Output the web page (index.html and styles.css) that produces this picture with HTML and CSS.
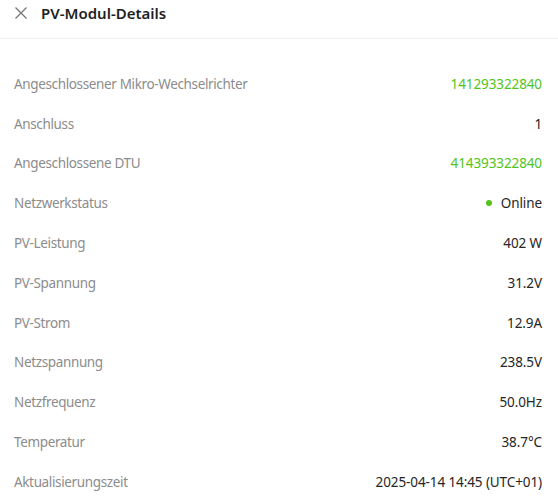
FILE: index.html
```html
<!DOCTYPE html>
<html lang="de">
<head>
<meta charset="UTF-8" />
<meta name="viewport" content="width=device-width, initial-scale=1" />
<title>PV-Modul-Details</title>
<link rel="stylesheet" href="styles.css">
</head>
<body>

<div class="header">
  <svg class="close" width="12" height="12" viewBox="0 0 12 12">
    <path d="M0.5 0.5 L11.5 11.5 M11.5 0.5 L0.5 11.5" stroke="#777" stroke-width="1.3" fill="none" />
  </svg>
  <h1>PV-Modul-Details</h1>
</div>

<div class="details">
  <div class="row"><span class="label">Angeschlossener Mikro-Wechselrichter</span><span class="value link">141293322840</span></div>
  <div class="row"><span class="label">Anschluss</span><span class="value">1</span></div>
  <div class="row"><span class="label">Angeschlossene DTU</span><span class="value link">414393322840</span></div>
  <div class="row"><span class="label">Netzwerkstatus</span><span class="value"><span class="dot"></span>Online</span></div>
  <div class="row"><span class="label">PV-Leistung</span><span class="value">402 W</span></div>
  <div class="row"><span class="label">PV-Spannung</span><span class="value">31.2V</span></div>
  <div class="row"><span class="label">PV-Strom</span><span class="value">12.9A</span></div>
  <div class="row"><span class="label">Netzspannung</span><span class="value">238.5V</span></div>
  <div class="row"><span class="label">Netzfrequenz</span><span class="value">50.0Hz</span></div>
  <div class="row"><span class="label">Temperatur</span><span class="value">38.7°C</span></div>
  <div class="row"><span class="label">Aktualisierungszeit</span><span class="value">2025-04-14 14:45 (UTC+01)</span></div>
</div>

</body>
</html>
```

FILE: styles.css
```css
body {
  margin: 0;
  background: #fff;
  font-family: "Noto Sans", "Open Sans", sans-serif;
  font-size: 13.5px;
  color: #262626;
}
.header {
  display: flex;
  align-items: center;
  gap: 14px;
  height: 24px;
  padding: 1px 15px 13px;
  border-bottom: 1px solid #f0f0f0;
}
.close {
  flex: none;
}
h1 {
  margin: 0;
  font-size: 15px;
  font-weight: 600;
  line-height: 24px;
  color: #1f1f1f;
}
.details {
  padding: 25px 16px 0 14px;
}
.row {
  display: flex;
  justify-content: space-between;
  align-items: center;
  height: 39.8px;
}
.label {
  color: #8c8c8c;
  letter-spacing: -0.36px;
}
.value {
  display: flex;
  align-items: center;
  color: #262626;
  letter-spacing: -0.1px;
}
.link {
  color: #52c41a;
}
.dot {
  width: 6px;
  height: 6px;
  border-radius: 50%;
  background: #52c41a;
  margin-right: 9px;
}
```
